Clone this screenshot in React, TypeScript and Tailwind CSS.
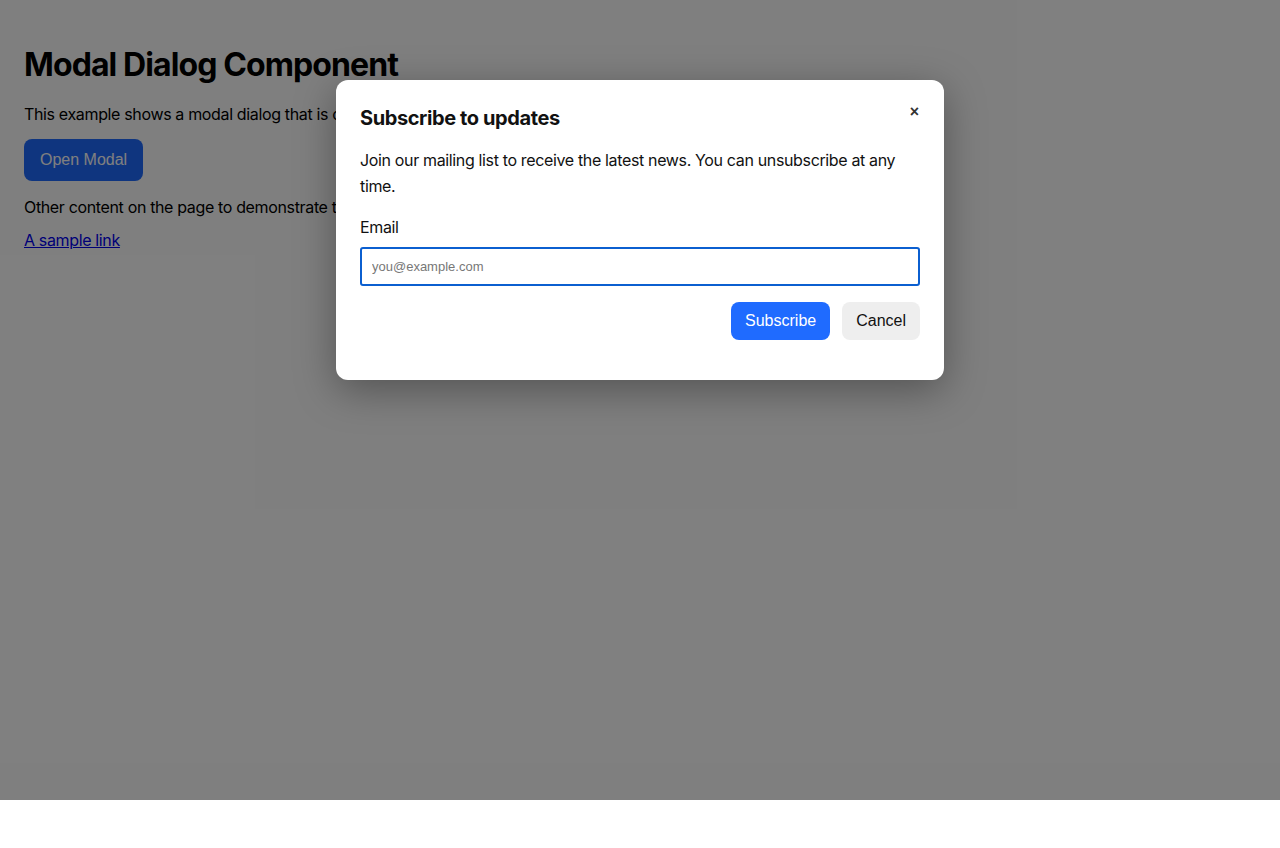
export default function App() {
  return (
    <div className="relative min-h-[848px] bg-white text-black font-['Inter','Noto_Sans',sans-serif] tracking-[-0.022em]">
      {/* page content */}
      <div className="px-6 pt-6">
        <h1 className="mt-[22px] text-[32px] font-bold leading-[38px] tracking-[-0.028em]">Modal Dialog Component</h1>
        <p className="mt-[20px] text-base leading-5">
          This example shows a modal dialog that is opened with the button below.
        </p>
        <button className="mt-[15px] h-[42px] rounded-lg bg-[#1f6bff] px-4 text-base tracking-normal text-white font-['Liberation_Sans',sans-serif]">
          Open Modal
        </button>
        <p className="mt-4 text-base leading-5">Other content on the page to demonstrate the focus trap.</p>
        <p className="mt-[13px] text-base leading-5">
          <a href="#" className="text-[#0000ee] underline">A sample link</a>
        </p>
      </div>

      {/* overlay */}
      <div className="absolute inset-x-0 top-0 h-[800px] bg-black/50">
        <div className="flex justify-center pt-20">
          <div className="relative w-[608px] rounded-xl bg-white px-6 pt-6 pb-10 text-[#111] shadow-[0_10px_40px_rgba(0,0,0,0.35)]">
            <button className="absolute right-[25px] top-[24px] text-[16px] font-bold leading-none tracking-normal text-[#333] font-['Liberation_Sans',sans-serif]">
              ×
            </button>
            <h2 className="text-xl font-bold leading-7 tracking-[-0.02em]">Subscribe to updates</h2>
            <p className="mt-[15px] text-base leading-[26px]">
              Join our mailing list to receive the latest news. You can unsubscribe at any time.
            </p>
            <label className="mt-4 block text-base leading-6">Email</label>
            <input
              className="mt-2 block h-[39px] w-full rounded-[3px] border-2 border-[#0b5fd0] px-[10px] text-[13px] tracking-normal outline-none placeholder:text-[#777] font-['Liberation_Sans',sans-serif]"
              placeholder="you@example.com"
            />
            <div className="mt-4 flex justify-end gap-3 font-['Liberation_Sans',sans-serif] tracking-normal">
              <button className="h-[38px] rounded-lg bg-[#1f6bff] px-[14px] text-base text-white">Subscribe</button>
              <button className="h-[38px] rounded-lg bg-[#eeeeee] px-[14px] text-base text-[#111]">Cancel</button>
            </div>
          </div>
        </div>
      </div>
    </div>
  )
}
